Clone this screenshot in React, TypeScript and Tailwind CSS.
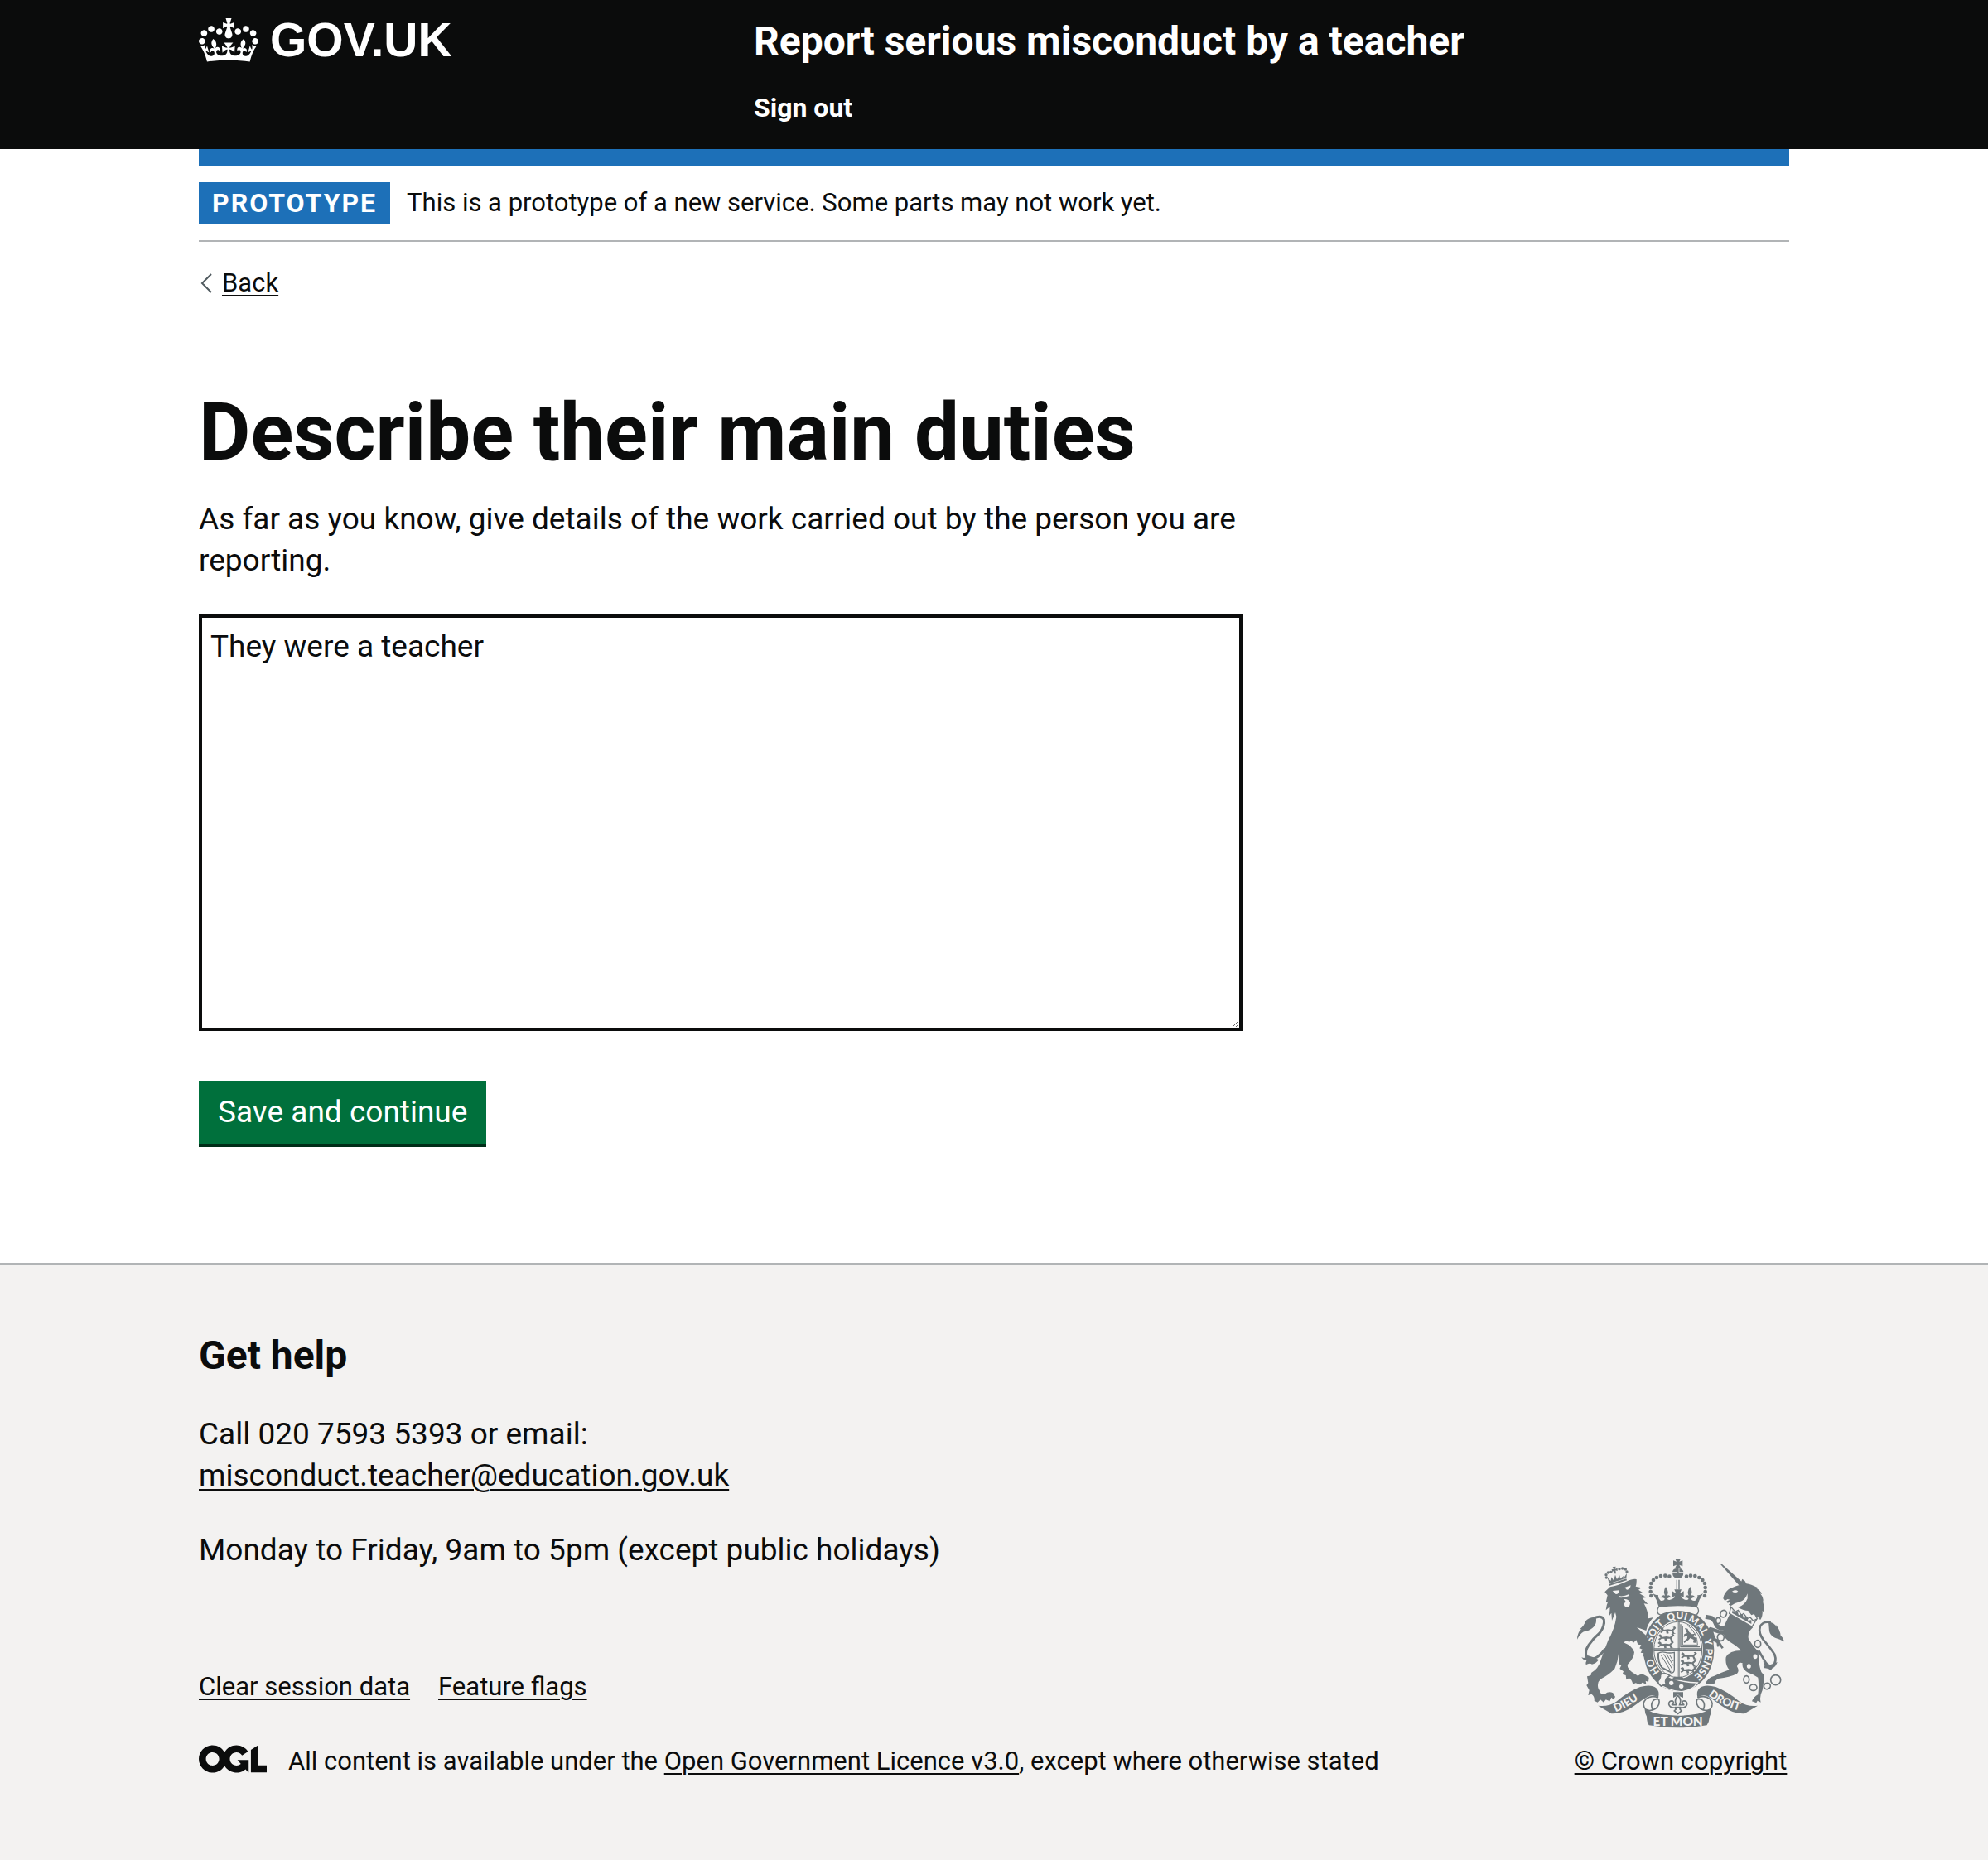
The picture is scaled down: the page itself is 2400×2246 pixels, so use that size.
import type { ReactNode } from "react";

const INK = "#6f777b";
const PAPER = "#f3f2f1";

function TextLink({ children, href = "#" }: { children: ReactNode; href?: string }) {
  return (
    <a href={href} className="underline decoration-2 underline-offset-4">
      {children}
    </a>
  );
}

function Crown() {
  return (
    <svg aria-hidden="true" viewBox="0 0 132 97" className="h-[53px] w-[72px] shrink-0" fill="currentColor">
      <path
        fillRule="evenodd"
        d="M25 30.2c3.5 1.5 7.7-.2 9.1-3.7 1.5-3.6-.2-7.8-3.9-9.2-3.6-1.4-7.6.3-9.1 3.9-1.4 3.5.3 7.5 3.9 9zM9 39.5c3.6 1.5 7.8-.2 9.2-3.7 1.5-3.6-.2-7.8-3.9-9.1-3.6-1.5-7.6.2-9.1 3.8-1.4 3.5.3 7.5 3.8 9zM4.4 57.2c3.5 1.5 7.7-.2 9.1-3.8 1.5-3.6-.2-7.7-3.9-9.1-3.5-1.5-7.6.3-9.1 3.8-1.4 3.5.3 7.6 3.9 9.1zm38.3-21.4c3.5 1.5 7.7-.2 9.1-3.8 1.5-3.6-.2-7.7-3.9-9.1-3.6-1.5-7.6.3-9.1 3.8-1.3 3.6.4 7.7 3.9 9.1zm64.4-5.6c-3.6 1.5-7.8-.2-9.1-3.7-1.5-3.6.2-7.8 3.8-9.2 3.6-1.4 7.7.3 9.2 3.9 1.3 3.5-.4 7.5-3.9 9zm15.9 9.3c-3.6 1.5-7.7-.2-9.1-3.7-1.5-3.6.2-7.8 3.7-9.1 3.6-1.5 7.7.2 9.2 3.8 1.5 3.5-.3 7.5-3.8 9zm4.7 17.7c-3.6 1.5-7.8-.2-9.2-3.8-1.5-3.6.2-7.7 3.9-9.1 3.6-1.5 7.7.3 9.2 3.8 1.3 3.5-.4 7.6-3.9 9.1zM89.3 35.8c-3.6 1.5-7.8-.2-9.2-3.8-1.4-3.6.2-7.7 3.9-9.1 3.6-1.5 7.7.3 9.2 3.8 1.4 3.6-.3 7.7-3.9 9.1zM69.7 17.7l8.9 4.7V9.3l-8.9 2.8c-.2-.3-.5-.6-.9-.9L72.4 0H59.6l3.5 11.2c-.3.3-.6.5-.9.9l-8.8-2.8v13.1l8.8-4.7c.3.3.6.7.9.9l-5 15.4v.1c-.2.8-.4 1.6-.4 2.4 0 4.1 3.1 7.5 7 8.1h.2c.3 0 .7.1 1 .1.4 0 .7 0 1-.1h.2c4-.6 7.1-4.1 7.1-8.1 0-.8-.1-1.7-.4-2.4V34l-5.1-15.4c.4-.2.7-.6 1-.9zM66 92.8c16.9 0 32.8 1.1 47.1 3.2 4-16.9 8.9-26.7 14-33.5l-9.6-3.4c1 4.9 1.1 7.2 0 10.2-1.5-1.4-3-4.3-4.2-8.7L108.6 76c2.8-2 5-3.2 7.5-3.3-4.4 9.4-10 11.9-13.6 11.2-4.3-.8-6.3-4.6-5.6-7.9 1-4.7 5.7-5.9 8-.5 4.3-8.7-3-11.4-7.6-8.8 7.1-7.2 7.9-13.5 2.1-21.1-8 6.1-8.1 12.3-4.5 20.8-4.7-5.4-12.1-2.5-9.5 6.2 3.4-5.2 7.9-2 7.2 3.1-.6 4.3-6.4 7.8-13.5 7.2-10.3-.9-10.9-8-11.2-13.8 2.5-.5 7.1 1.8 11 7.3L80.2 60c-4.1 4.4-8 5.3-12.3 5.4 1.4-4.4 8-11.6 8-11.6H55.5s6.4 7.2 7.9 11.6c-4.2-.1-8-1-12.3-5.4l1.4 16.4c3.9-5.5 8.5-7.7 10.9-7.3-.3 5.8-.9 12.8-11.1 13.8-7.2.6-12.9-2.9-13.5-7.2-.7-5 3.8-8.3 7.1-3.1 2.7-8.7-4.6-11.6-9.4-6.2 3.7-8.5 3.6-14.7-4.6-20.8-5.8 7.6-5 13.9 2.2 21.1-4.7-2.6-11.9.1-7.7 8.8 2.3-5.5 7.1-4.2 8.1.5.7 3.3-1.3 7.1-5.7 7.9-3.5.7-9-1.8-13.5-11.2 2.5.1 4.7 1.3 7.5 3.3l-4.7-15.4c-1.2 4.4-2.7 7.2-4.3 8.7-1.1-3-.9-5.3 0-10.2l-9.5 3.4c5 6.9 9.9 16.7 14 33.5 14.8-2.1 30.8-3.2 47.7-3.2z"
      />
    </svg>
  );
}

function OglLogo() {
  return (
    <svg aria-hidden="true" viewBox="0 0 483.2 195.7" className="h-[34px] w-[82px] shrink-0" fill="currentColor">
      <path d="M421.5 142.8V.1l-50.7 32.3v161.1h112.4v-50.7zm-122.3-9.6A47.12 47.12 0 0 1 221 97.8c0-26 21.1-47.1 47.1-47.1 16.7 0 31.4 8.7 39.7 21.8l42.7-27.2A97.63 97.63 0 0 0 268.1 0c-36.5 0-68.3 20.1-85.1 49.7A98 98 0 0 0 97.8 0C43.9 0 0 43.9 0 97.8s43.9 97.8 97.8 97.8c36.5 0 68.3-20.1 85.1-49.7a97.76 97.76 0 0 0 149.6 25.4l19.4 22.2h3v-87.8h-80l24.3 27.5zM97.8 145c-26 0-47.1-21.1-47.1-47.1s21.1-47.1 47.1-47.1 47.1 21.1 47.1 47.1S123.8 145 97.8 145" />
    </svg>
  );
}

function Lion() {
  return (
    <g transform="translate(60 75)">
      {/* tail */}
      <g fill="none" stroke={INK} strokeLinecap="round">
        <path strokeWidth="9" d="M72 209Q100 197 109 214Q113 236 94 262Q70 283 54 306Q38 330 46 348Q60 364 84 350Q102 338 112 322" />
      </g>
      <path fill={INK} d="M12 286Q12 262 28 248L20 250Q38 236 42 220Q54 204 80 206Q84 226 74 238Q58 256 36 258Q22 266 12 286Z" />
      <path fill={INK} d="M50 344Q40 358 28 350Q34 362 46 362Q42 370 44 378Q56 370 66 376Q80 374 90 360L76 352Z" />
      {/* body */}
      <path
        fill={INK}
        d="M112 114L131 96Q160 92 200 72Q214 66 227 68Q228 84 224 94L245 99L234 106L252 118L238 120L262 134L248 136L268 158L254 156Q268 180 270 210L288 206Q268 228 262 254L228 242L262 272Q280 300 288 330L288 352L276 356L272 344L262 352L250 346L254 336L242 334L248 322L238 318L244 306L232 304L226 288L216 298L208 290L200 296L192 290L180 297Q212 310 219 332Q218 354 194 378Q194 392 210 404L232 418Q244 408 258 416L272 424L270 440L260 436L262 448L248 442L240 450L224 444L214 448Q210 432 200 426L190 432L188 416L176 412L180 402L166 392L172 380L162 374Q168 356 162 338Q160 366 148 392Q126 416 96 430Q84 442 88 462L98 482L112 484Q126 472 142 480L150 494L144 504L136 496L130 510L116 504L108 514L96 504L86 514L74 508Q76 492 64 484L52 488L56 470L46 452L52 444L48 420Q70 414 62 408Q90 392 98 360Q112 320 124 290Q148 248 154 204L150 188L138 218L136 190L126 204Q132 182 130 168L116 180Q118 160 124 148L116 152L122 126Z"
      />
      {/* face */}
      <g fill={PAPER}>
        <path d="M140 110L164 108Q164 122 152 122Z" />
        <path d="M184 98L206 90Q204 106 192 106Z" />
        <path d="M162 128Q180 132 200 122L200 128Q184 136 164 134Z" />
        <path d="M182 140Q196 138 204 152Q204 168 192 170Q182 168 182 156L188 150Z" />
      </g>
      {/* crown */}
      <g fill={INK}>
        <path d="M126 86L190 66L192 72L128 92Z" />
        <path d="M128 84L122 62L134 74L136 60L144 72L150 52L156 68L166 54L168 66L180 56L178 68L192 46L190 64Z" />
        <path d="M140 24L152 22L149 31L158 28L158 38L151 36L153 48L147 48L145 38L138 41L137 32L144 32Z" />
        <circle cx="118" cy="62" r="5" />
        <circle cx="117" cy="52" r="5" />
        <circle cx="124" cy="44" r="5" />
        <circle cx="134" cy="42" r="5" />
        <circle cx="165" cy="31" r="5" />
        <circle cx="176" cy="29" r="5" />
        <circle cx="187" cy="32" r="5" />
        <circle cx="192" cy="41" r="5" />
      </g>
    </g>
  );
}

function Unicorn() {
  return (
    <g transform="translate(525 75)">
      {/* tail */}
      <path
        fill="none"
        stroke={INK}
        strokeWidth="8"
        d="M248 225Q222 218 210 238Q202 262 222 288Q248 318 262 340Q272 366 254 384Q236 384 224 360L204 326"
      />
      <path fill={INK} d="M240 222Q262 226 270 242L266 232Q282 250 284 272Q292 278 297 294Q278 284 264 280Q246 272 243 256Z" />
      <path fill={INK} d="M272 368Q268 384 252 392L250 398Q238 388 222 390Q230 380 220 366L240 380Z" />
      {/* horn and head */}
      <path fill={INK} d="M63 10L70 12L149 82L133 90Z" />
      <path
        fill={INK}
        d="M104 100Q120 92 137 88L145 67Q156 72 160 84Q176 86 200 98L192 98Q212 108 216 122L210 120Q224 136 220 150Q226 168 224 188L218 182Q220 202 210 216L202 202L198 212L188 194L178 198L166 182Q150 182 130 170Q156 160 164 138L164 120Q156 144 136 150Q118 154 104 164L96 160L104 150L92 154L88 148L100 142L92 140L82 146L76 138Q78 118 96 104Z"
      />
      <path fill={PAPER} d="M108 112Q122 104 130 112Q120 120 108 112Z" />
      {/* forelegs */}
      <g fill="none" stroke={INK} strokeLinejoin="round">
        <path strokeWidth="15" d="M90 244Q64 250 52 236Q46 218 34 208L12 204" />
        <path strokeWidth="13" d="M92 262L60 258L30 248L42 286L62 296" />
        <path strokeWidth="8" d="M60 296L74 318M56 296L58 312" />
      </g>
      {/* body */}
      <path
        fill={INK}
        d="M100 194L184 242Q162 262 168 284Q186 314 204 330Q202 372 214 404L222 414Q224 444 218 470Q206 494 212 514L200 508L196 516L180 510Q188 492 202 486Q206 452 202 424Q186 412 166 406Q142 392 146 372Q130 366 126 384Q136 400 126 410Q100 424 58 428Q46 434 44 446L12 446Q20 424 44 418Q70 406 98 396Q82 376 86 350Q98 326 142 326Q118 304 96 292Q70 276 78 240Z"
      />
      {/* coronet collar */}
      <path fill={PAPER} stroke={INK} strokeWidth="4" d="M104 168L98 192L180 240L198 212L184 218L174 206L164 210L150 192L142 198L130 180L120 186Z" />
      <path fill={INK} d="M110 180L118 190L128 184L132 198L146 194L150 208L164 204L166 218L178 216L178 230L108 190Z" />
      {/* chain */}
      <g fill={PAPER} stroke={INK} strokeWidth="5">
        <ellipse cx="77" cy="193" rx="11" ry="13" transform="rotate(25 77 193)" />
        <ellipse cx="58" cy="218" rx="8" ry="11" />
        <ellipse cx="67" cy="278" rx="12" ry="13" />
        <ellipse cx="201" cy="302" rx="11" ry="13" />
        <ellipse cx="192" cy="348" rx="10" ry="11" />
        <ellipse cx="169" cy="383" rx="10" ry="11" />
        <ellipse cx="160" cy="431" rx="10" ry="13" />
        <ellipse cx="185" cy="460" rx="13" ry="11" />
        <ellipse cx="235" cy="455" rx="12" ry="11" transform="rotate(-35 235 455)" />
        <circle cx="266" cy="433" r="18" />
      </g>
    </g>
  );
}

const archDots: [number, number][] = [
  [340, 203], [338, 188], [338, 173], [340, 158], [348, 146], [360, 137], [375, 131], [391, 130], [406, 133],
];

function RoyalCrown() {
  return (
    <g fill={INK}>
      <path d="M427 68H447L442 79L454 75V96L442 91L447 102H427L432 91L420 96V75L432 79Z" />
      <path d="M434 104H440V118H457Q457 140 437 140Q417 140 417 118H434Z" />
      <path d="M417 116Q420 104 432 104V116ZM457 116Q454 104 442 104V116Z" />
      {archDots.map(([x, y]) => (
        <g key={x * 1000 + y}>
          <circle cx={x} cy={y} r="7" />
          <circle cx={874 - x} cy={y} r="7" />
        </g>
      ))}
      <path d="M431 145H435V180H431ZM439 145H443V180H439Z" />
      <path d="M346 194Q356 202 366 200Q364 212 374 220Q384 224 390 214Q382 206 374 210Q380 198 390 202Q382 186 393 170Q406 186 398 202Q408 198 412 210Q404 206 398 214Q406 224 424 210L426 204L416 208V186L430 194L424 180H450L444 194L458 186V208L448 204L450 210Q468 224 476 214Q470 206 462 210Q466 198 476 202Q468 186 481 170Q492 186 484 202Q494 198 500 210Q492 206 484 214Q490 224 500 220Q510 212 508 200Q518 202 528 194Q512 218 506 244Q437 232 368 244Q362 218 346 194Z" />
      <path fill={PAPER} stroke={INK} strokeWidth="4" d="M368 243Q437 232 506 243Q516 254 508 268L500 272Q437 246 374 272L366 268Q358 254 368 243Z" />
    </g>
  );
}

const passant = "M0 8L6 2L12 6L14 12L30 10L42 12L50 6L46 2L54 0L58 6L48 16L52 24L58 26L46 27L42 18L30 18L32 25L24 27L22 18L12 18L4 24L0 20L8 14Z";

function Shield() {
  return (
    <g>
      <ellipse cx="440" cy="400" rx="128" ry="149" fill={INK} />
      <ellipse cx="437" cy="398" rx="91" ry="106" fill={PAPER} />
      <ellipse cx="437" cy="398" rx="87" ry="101" fill={PAPER} stroke={INK} strokeWidth="3" />
      <g stroke={INK} strokeWidth="4" fill="none">
        <path d="M434 298V498M441 298V498M350 395H524M350 402H524" />
        <path d="M447 306V388H516" />
        <path strokeWidth="3" d="M454 312V381H508Q508 338 472 310" />
      </g>
      <g fill={INK}>
        <path transform="translate(372 314)" d={passant} />
        <path transform="translate(366 340)" d={passant} />
        <path transform="translate(364 366)" d={passant} />
        <path transform="translate(448 406)" d={passant} />
        <path transform="translate(446 432)" d={passant} />
        <path transform="translate(446 458)" d={passant} />
        <path d="M462 320L472 322L478 334L488 342L500 340L492 350L504 356L500 374L492 372L494 362L482 356L474 364L460 374L458 368L470 358L472 346L458 352L460 342L470 338Z" />
      </g>
      <g fill="none" stroke={INK} strokeWidth="4">
        <path d="M364 412Q376 404 392 408Q406 412 424 408V470Q424 484 410 482" />
        <path strokeWidth="6" d="M366 412Q364 446 380 464L412 480" />
        <path strokeWidth="3" d="M376 418L410 474M386 414L416 468M396 414L420 456M406 416L420 440" />
      </g>
      <path id="garter" fill="none" d="M440 513A97 113 0 0 1 440 287A97 113 0 0 1 440 513" />
      <g fill={PAPER} className="font-['Lato'] text-[36px] font-black">
        <text><textPath href="#garter" startOffset="12%">HO</textPath></text>
        <text><textPath href="#garter" startOffset="29%">SOIT</textPath></text>
        <text><textPath href="#garter" startOffset="44%">QUI</textPath></text>
        <text><textPath href="#garter" startOffset="55%">MAL</textPath></text>
        <text><textPath href="#garter" startOffset="69%">Y</textPath></text>
        <text><textPath href="#garter" startOffset="74%">PENSE</textPath></text>
      </g>
      {/* buckle and strap end */}
      <path fill={INK} stroke={PAPER} strokeWidth="4" d="M380 484Q430 516 508 518Q490 546 448 550Q400 546 366 520Z" />
      <path fill={PAPER} stroke={INK} strokeWidth="5" d="M374 488Q392 480 408 492L398 500Q388 508 394 522L376 530Q362 520 366 510Q374 504 374 488Z" />
      <circle cx="413" cy="519" r="8" fill={PAPER} />
      <circle cx="449" cy="531" r="8" fill={PAPER} />
      <path fill={INK} d="M424 496H452L462 508H412Z" />
    </g>
  );
}

function Ribbon() {
  const side = "M148 601Q185 606 214 586Q256 550 300 533Q340 522 358 537Q372 548 366 572Q350 560 332 566Q306 580 278 602Q236 632 196 630Z";
  const curl = "M366 572Q340 562 322 576Q304 594 320 614Q336 624 356 612Q374 598 368 578Q352 574 344 588Q338 602 346 616";
  return (
    <g>
      <g fill={INK}>
        <path d={side} />
        <path d={side} transform="translate(874 0) scale(-1 1)" />
        <path d="M318 606Q336 636 437 637Q538 636 556 606Q562 620 552 640Q550 660 542 672Q437 690 332 672Q324 660 324 640Q314 622 318 606Z" />
      </g>
      <g fill={PAPER} stroke={INK} strokeWidth="5">
        <path d={curl} />
        <path d={curl} transform="translate(874 0) scale(-1 1)" />
      </g>
      <path id="motto-left" fill="none" d="M212 624Q260 606 324 556" />
      <path id="motto-right" fill="none" d="M547 564Q606 610 690 626" />
      <g fill={PAPER} className="font-['Lato'] font-black">
        <text className="text-[40px]"><textPath href="#motto-left">DIEU</textPath></text>
        <text className="text-[40px]"><textPath href="#motto-right">DROIT</textPath></text>
        <text x="437" y="673" textAnchor="middle" className="text-[46px]">ET MON</text>
      </g>
      {/* fleur-de-lis */}
      <path fill={INK} d="M420 552H456V572L446 568L437 560L428 568L420 572Z" />
      <g fill={PAPER} stroke={INK} strokeWidth="5">
        <path d="M437 564Q452 578 443 598H460Q448 592 456 584Q470 582 470 596Q466 610 448 608L444 614L450 620L437 630L424 620L430 614L426 608Q408 610 404 596Q404 582 418 584Q426 592 414 598H431Q422 578 437 564Z" />
        <path d="M426 607H448" />
      </g>
    </g>
  );
}

function RoyalArms() {
  return (
    <svg aria-hidden="true" viewBox="72 68 750 615" className="h-[205px] w-[250px]">
      <Shield />
      <RoyalCrown />
      <Unicorn />
      <Lion />
      <Ribbon />
    </svg>
  );
}

export default function App() {
  return (
    <div className="flex min-h-screen flex-col bg-white font-['Roboto','Liberation_Sans',sans-serif] text-[37px] leading-[50px] text-[#0b0c0c]">
      <header className="bg-[#0b0c0c] px-[30px] text-white">
        <div className="mx-auto flex max-w-[1920px] items-start py-5">
          <div className="w-1/3 shrink-0">
            <a href="#" className="flex h-14 items-center gap-[14px] font-['Liberation_Sans',sans-serif] text-[57px] leading-[60px] font-bold">
              <Crown />
              GOV.UK
            </a>
          </div>
          <div className="flex flex-col items-start gap-[30px] pb-[10px] pl-[30px] font-bold">
            <a href="#" className="text-[48px] leading-[60px]">
              Report serious misconduct by a teacher
            </a>
            <nav>
              <a href="#" className="block text-[32px] leading-10">
                Sign out
              </a>
            </nav>
          </div>
        </div>
      </header>

      <div className="grow px-[30px]">
        <div className="mx-auto max-w-[1920px]">
          <div className="h-5 bg-[#1d70b8]" />
          <div className="flex items-center gap-5 border-b-2 border-[#b1b4b6] py-5 text-[31px] leading-10">
            <strong className="bg-[#1d70b8] px-4 py-[5px] text-[32px] tracking-[2px] text-white">PROTOTYPE</strong>
            <span>This is a prototype of a new service. Some parts may not work yet.</span>
          </div>
          <div className="mt-[30px] flex items-center gap-3 text-[31px] leading-10">
            <svg aria-hidden="true" viewBox="0 0 16 24" className="h-6 w-4" fill="none" stroke="#505a5f" strokeWidth="2">
              <path d="M15 1L4 12L15 23" />
            </svg>
            <TextLink>Back</TextLink>
          </div>

          <main className="max-w-[1260px] pt-[110px] pb-[144px]">
            <form onSubmit={(event) => event.preventDefault()}>
              <h1 className="text-[96px] leading-[100px] font-bold">
                <label htmlFor="duties">Describe their main duties</label>
              </h1>
              <p id="duties-hint" className="mt-[30px]">
                As far as you know, give details of the work carried out by the person you are reporting.
              </p>
              <textarea
                id="duties"
                aria-describedby="duties-hint"
                defaultValue="They were a teacher"
                className="mt-10 block h-[503px] w-full resize-y border-4 border-[#0b0c0c] p-[10px] leading-[50px] outline-none"
              />
              <button
                type="submit"
                className="mt-[60px] block bg-[#00703c] px-[23px] py-[13px] text-white shadow-[0_4px_0_#002d18]"
              >
                Save and continue
              </button>
            </form>
          </main>
        </div>
      </div>

      <footer className="border-t-2 border-[#b1b4b6] bg-[#f3f2f1] px-[30px] pt-20 pb-[99px]">
        <div className="mx-auto flex max-w-[1920px] items-end justify-between gap-[60px]">
          <div>
            <h2 className="text-[48px] leading-[60px] font-bold">Get help</h2>
            <p className="mt-10">
              Call 020 7593 5393 or email:
              <br />
              <TextLink href="mailto:misconduct.teacher@education.gov.uk">misconduct.teacher@education.gov.uk</TextLink>
            </p>
            <p className="mt-10">Monday to Friday, 9am to 5pm (except public holidays)</p>
            <ul className="mt-[120px] flex gap-[34px] text-[31px] leading-10">
              <li>
                <TextLink>Clear session data</TextLink>
              </li>
              <li>
                <TextLink>Feature flags</TextLink>
              </li>
            </ul>
            <div className="mt-[50px] flex items-start gap-[26px] text-[31px] leading-10">
              <OglLogo />
              <span>
                All content is available under the <TextLink>Open Government Licence v3.0</TextLink>, except where
                otherwise stated
              </span>
            </div>
          </div>
          <a
            href="#"
            className="flex min-w-[262px] shrink-0 flex-col items-center gap-5 text-[31px] leading-10 underline decoration-2 underline-offset-4"
          >
            <RoyalArms />
            <span>© Crown copyright</span>
          </a>
        </div>
      </footer>
    </div>
  );
}
